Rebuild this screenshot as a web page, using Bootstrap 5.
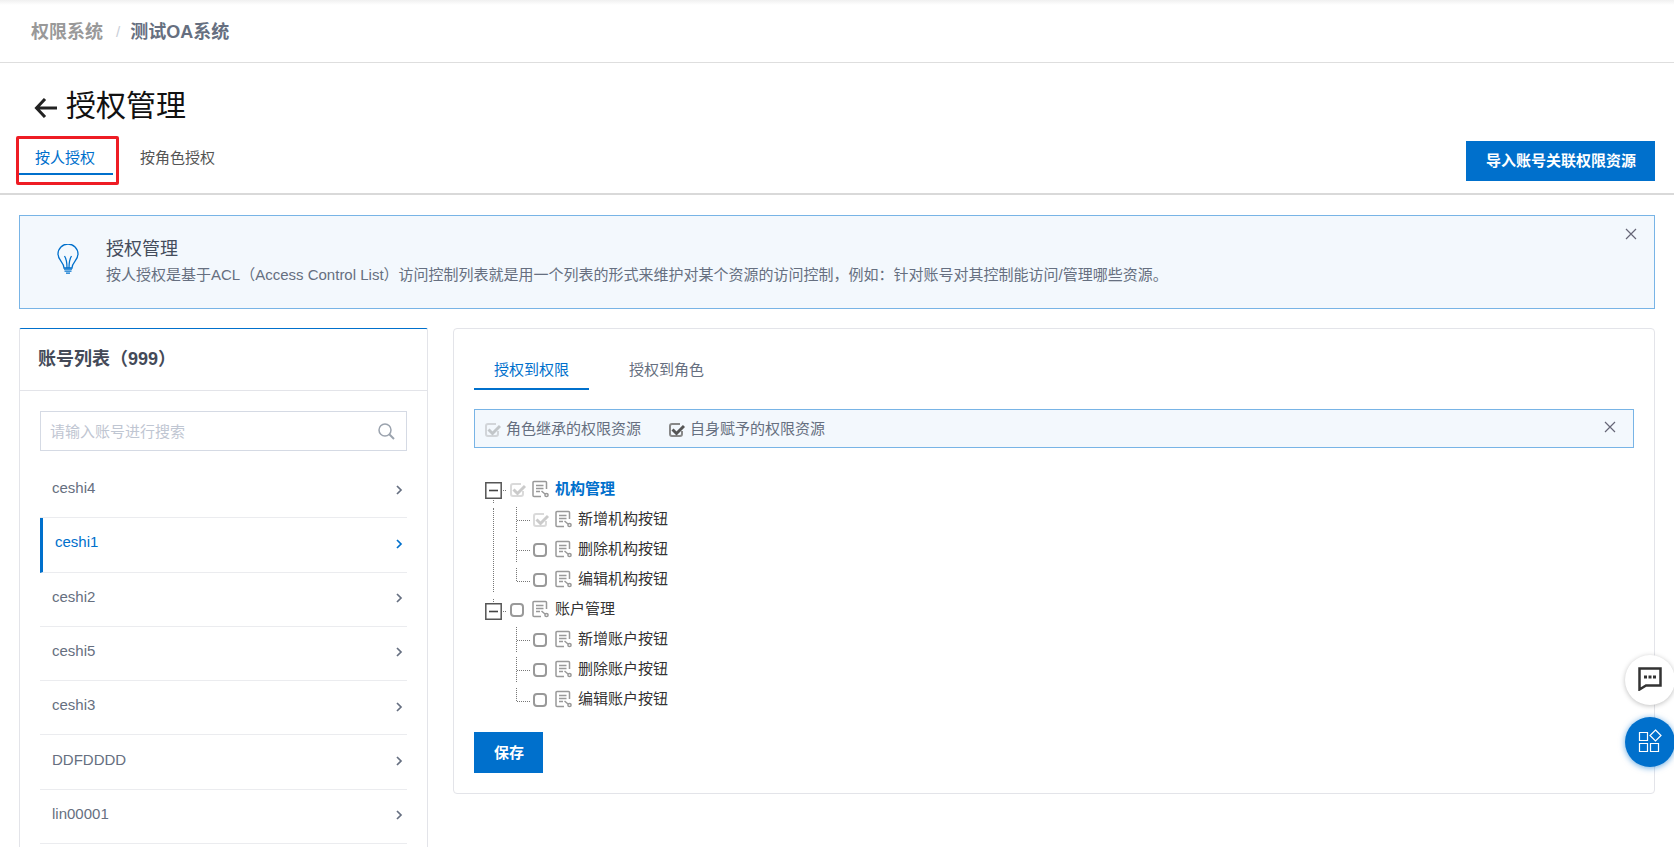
<!DOCTYPE html>
<html lang="zh-CN">
<head>
<meta charset="utf-8">
<meta name="viewport" content="width=device-width, initial-scale=1">
<title>授权管理</title>
<link href="https://cdn.jsdelivr.net/npm/bootstrap@5.3.0/dist/css/bootstrap.min.css" rel="stylesheet">
<style>
  :root { --brand: #0070cc; --line: #e3e4e9; --ink: #666f80; }
  body {
    font-family: "Liberation Sans", "Noto Sans CJK SC", sans-serif;
    font-size: 15px; line-height: 20px; color: var(--ink); background: #fff;
    height: 100vh; overflow: hidden;
  }
  svg { display: block; flex: none; }
  a { text-decoration: none; }
  .topbar { height: 63px; padding: 1px 31px 0; border-bottom: 1px solid #dedede; background: linear-gradient(#f0f0f0, #fff 5px); }
  .topbar .breadcrumb { font-size: 18px; font-weight: 700; }
  .topbar .breadcrumb a { color: #999; }
  .topbar .breadcrumb-item + .breadcrumb-item { padding-left: 13px; color: var(--ink); }
  .topbar .breadcrumb-item + .breadcrumb-item::before { padding-right: 10px; color: #c9ced8; font-weight: 400; font-size: 15px; }

  .page-head { padding: 20px 19px 12px 17px; border-bottom: 2px solid #d9d9d9; }
  .page-head h1 { font-size: 30px; line-height: 46px; font-weight: 400; color: #111; margin: 0; }
  .page-title { padding-left: 17px; gap: 8px; margin-bottom: 12px; }
  .tab-link { display: block; border: 0; border-bottom: 2px solid transparent; background: none; color: #555; }
  .tab-link.active { color: var(--brand); border-color: var(--brand); }
  .head-tabs { gap: 9px; }
  .head-tabs .tab-link { padding: 2px 18px 0; line-height: 30px; }
  .marked { position: relative; }
  .marked::after { content: ""; position: absolute; inset: -5px -6px -10px -1px; border: 3px solid #ee1c24; border-radius: 2px; pointer-events: none; }
  .btn-brand { background: var(--brand); color: #fff; border: 0; border-radius: 0; font-size: 15px; font-weight: 700; line-height: 20px; padding: 10px 19px 10px 20px; }
  .btn-brand:hover { background: #005fad; color: #fff; }

  .page-body { padding: 20px 19px 0; }
  .notice { background: #f3f8fd; border: 1px solid #78b4e6; }
  .page-notice { padding: 20px 17px 19px 37px; min-height: 94px; margin-bottom: 19px; gap: 27px; }
  .page-notice h2 { font-size: 18px; line-height: 24px; font-weight: 400; color: #444c5c; margin: 1px 0 4px; }
  .x-btn { border: 0; background: none; padding: 0; color: #667; }
  .page-notice .x-btn { margin-top: -8px; }

  .columns { gap: 25px; }
  .account-panel { flex: 0 0 25%; border: 1px solid var(--line); border-top-color: var(--brand); border-bottom: 0; border-radius: 2px 2px 0 0; }
  .account-panel h2 { font-size: 18px; line-height: 61px; font-weight: 700; color: #444a58; margin: 0; padding: 0 18px; border-bottom: 1px solid var(--line); }
  .account-body { padding: 20px; }
  .search-box { border: 1px solid #d5dae4; height: 40px; padding-right: 11px; color: #9ba3ae; }
  .search-box input { border: 0; font-size: 15px; padding: 0 9px; box-shadow: none !important; }
  .search-box input::placeholder { color: #bfc6d2; }
  .accounts { display: grid; grid-auto-rows: 1fr; height: 380px; margin: 13px 0 0; }
  .accounts a { height: 100%; color: var(--ink); padding: 0 3px 5px 12px; border-bottom: 1px solid #ebecef; }
  .accounts a svg { margin-top: 3px; }
  .accounts a.active { color: var(--brand); box-shadow: none; border-left: 3px solid var(--brand); }

  .grant-panel { border: 1px solid var(--line); border-radius: 4px; padding: 20px; min-width: 0; }
  .grant-tabs { gap: 20px; margin: 0 0 19px; }
  .grant-tabs .tab-link { padding: 3px 20px 0; line-height: 36px; color: var(--ink); }
  .grant-tabs .tab-link.active { color: var(--brand); }
  .legend-bar { height: 39px; padding: 1px 17px 0 9px; margin-bottom: 26px; }
  .legend-bar label { gap: 5px; margin-right: 27px; }
  .legend-bar .x-btn { margin-top: -4px; }

  .tick { appearance: none; flex: none; width: 17px; height: 17px; margin: 3px 0 0; background: center / 17px 17px no-repeat url("data:image/svg+xml,%3Csvg xmlns='http://www.w3.org/2000/svg' viewBox='0 0 17 17'%3E%3Crect x='2' y='2' width='12' height='12' rx='3' fill='%23fff' stroke='%23999' stroke-width='2'/%3E%3C/svg%3E"); }
  .tick:checked { background-image: url("data:image/svg+xml,%3Csvg xmlns='http://www.w3.org/2000/svg' viewBox='0 0 17 17' fill='none'%3E%3Cpath d='M14 9v3a2 2 0 0 1-2 2H4a2 2 0 0 1-2-2V4a2 2 0 0 1 2-2h8' stroke='%23888' stroke-width='2'/%3E%3Cpath d='M4.500 7.500l4 4L16 4' stroke='%23555' stroke-width='3'/%3E%3C/svg%3E"); }
  .tick:disabled { opacity: .3; }

  .tree, .tree ul { list-style: none; margin: 0; padding: 0; }
  .tree { padding-left: 11px; color: #333; }
  .tree ul { position: relative; padding-left: 31px; }
  .tree li:not(:last-child) > ul::before { content: ""; position: absolute; left: 8px; top: 4px; bottom: 2px; border-left: 1px dotted #777; }
  .node { height: 30px; }
  .node label { display: flex; align-items: center; gap: 6px; }
  .node label svg { color: #999; }
  .node .fold { border: 0; background: none; padding: 0; width: 24px; }
  .node .chosen { color: var(--brand); font-weight: 700; }
  .save-row { margin-top: 18px; }
  .save-row .btn-brand { padding-top: 11px; }

  .floaters { position: fixed; right: -1px; bottom: 80px; gap: 12px; }
  .floaters button { width: 50px; height: 50px; border: 0; border-radius: 50%; background: #fff; color: #333; box-shadow: 0 1px 5px rgba(0,0,0,.25); padding: 0 0 3px; }
  .floaters button.apps { background: var(--brand); color: #fff; box-shadow: 0 1px 6px rgba(0,112,204,.6); }
</style>
</head>
<body class="d-flex flex-column">

<svg width="0" height="0" class="position-absolute" aria-hidden="true">
  <symbol id="chevron" viewBox="0 0 9 10"><path d="M2 1l4 4-4 4" fill="none" stroke="currentColor" stroke-width="1.700"/></symbol>
  <symbol id="cross" viewBox="0 0 12 12"><path d="M1 1l10 10M11 1L1 11" fill="none" stroke="currentColor" stroke-width="1.200"/></symbol>
  <symbol id="res" viewBox="0 0 17 18"><g fill="none" stroke="currentColor" stroke-width="1.500"><path d="M14.500 9V2.500a1 1 0 0 0-1-1H2a1 1 0 0 0-1 1v13a1 1 0 0 0 1 1h7M4 5.500h7.500M4 8.500h7.500M4 11.500h4"/><path d="M9.500 11l3.500 3"/><circle cx="14.500" cy="15" r="1.600"/></g></symbol>
  <symbol id="minus" viewBox="0 0 24 30"><path d="M.8 8.800h15.400v15.400H.8z" fill="none" stroke="#555" stroke-width="1.500"/><path d="M4 16.500h9" stroke="#444" stroke-width="1.600"/><path d="M18 16.500h4M8.500 26v4" stroke="#777" stroke-dasharray="1 1"/></symbol>
  <symbol id="minus-end" viewBox="0 0 24 30"><path d="M.8 9.800h15.400v15.400H.8z" fill="none" stroke="#555" stroke-width="1.500"/><path d="M4 17.500h9" stroke="#444" stroke-width="1.600"/><path d="M18 17.500h4M8.500 5v4" stroke="#777" stroke-dasharray="1 1"/></symbol>
  <symbol id="join-mid" viewBox="0 0 16 30"><path d="M.5 3v26M1 16.500h13" fill="none" stroke="#777" stroke-dasharray="1 1"/></symbol>
  <symbol id="join-end" viewBox="0 0 16 30"><path d="M.5 4v14M1 17.500h13" fill="none" stroke="#777" stroke-dasharray="1 1"/></symbol>
</svg>

<header class="topbar d-flex align-items-center flex-shrink-0">
  <nav aria-label="breadcrumb">
    <ol class="breadcrumb mb-0">
      <li class="breadcrumb-item"><a href="#">权限系统</a></li>
      <li class="breadcrumb-item" aria-current="page">测试OA系统</li>
    </ol>
  </nav>
</header>

<div class="page-head flex-shrink-0">
  <div class="page-title d-flex align-items-center">
    <a href="#" aria-label="返回" class="pt-1"><svg width="24" height="20" viewBox="0 0 24 20" fill="none" stroke="#222" stroke-width="3"><path d="M23 10H3M11 1L2.500 10l8.500 9"/></svg></a>
    <h1>授权管理</h1>
  </div>
  <div class="d-flex justify-content-between align-items-start">
    <nav class="head-tabs d-flex">
      <div class="marked"><a class="tab-link active" href="#">按人授权</a></div>
      <a class="tab-link" href="#">按角色授权</a>
    </nav>
    <button type="button" class="btn btn-brand">导入账号关联权限资源</button>
  </div>
</div>

<main class="page-body d-flex flex-column flex-grow-1">
  <section class="notice page-notice d-flex align-items-start">
    <svg class="mt-2" width="22" height="30" viewBox="0 0 22 30" fill="none" stroke="#0070cc" stroke-width="1.300"><path d="M7 24c0-6-6-7.500-6-14a10 10 0 0 1 20 0c0 6.500-6 8-6 14zM7.500 12c2 3 2.500 6 2.500 12M14.500 12c-2 3-2.500 6-2.500 12"/><path d="M7 25.200h8M7.500 27.200h7M9 29.200h4"/></svg>
    <div class="flex-grow-1">
      <h2>授权管理</h2>
      <p class="mb-0">按人授权是基于ACL（Access Control List）访问控制列表就是用一个列表的形式来维护对某个资源的访问控制，例如：针对账号对其控制能访问/管理哪些资源。</p>
    </div>
    <button type="button" class="x-btn" aria-label="关闭"><svg width="12" height="12"><use href="#cross"/></svg></button>
  </section>

  <div class="columns d-flex flex-grow-1 align-items-start">
    <aside class="account-panel align-self-stretch">
      <h2>账号列表（999）</h2>
      <div class="account-body">
        <div class="search-box d-flex align-items-center">
          <input type="search" class="form-control h-100" placeholder="请输入账号进行搜索" aria-label="搜索账号">
          <svg width="17" height="17" viewBox="0 0 17 17" fill="none" stroke="currentColor"><circle cx="7" cy="7" r="6" stroke-width="1.500"/><path d="M11 11l5 5" stroke-width="2"/></svg>
        </div>
        <ul class="accounts list-unstyled">
          <li><a href="#" class="d-flex align-items-center justify-content-between">ceshi4<svg width="9" height="10"><use href="#chevron"/></svg></a></li>
          <li><a href="#" class="active d-flex align-items-center justify-content-between">ceshi1<svg width="9" height="10"><use href="#chevron"/></svg></a></li>
          <li><a href="#" class="d-flex align-items-center justify-content-between">ceshi2<svg width="9" height="10"><use href="#chevron"/></svg></a></li>
          <li><a href="#" class="d-flex align-items-center justify-content-between">ceshi5<svg width="9" height="10"><use href="#chevron"/></svg></a></li>
          <li><a href="#" class="d-flex align-items-center justify-content-between">ceshi3<svg width="9" height="10"><use href="#chevron"/></svg></a></li>
          <li><a href="#" class="d-flex align-items-center justify-content-between">DDFDDDD<svg width="9" height="10"><use href="#chevron"/></svg></a></li>
          <li><a href="#" class="d-flex align-items-center justify-content-between">lin00001<svg width="9" height="10"><use href="#chevron"/></svg></a></li>
        </ul>
      </div>
    </aside>

    <section class="grant-panel flex-grow-1">
      <nav class="grant-tabs d-flex">
        <a class="tab-link active" href="#">授权到权限</a>
        <a class="tab-link" href="#">授权到角色</a>
      </nav>
      <div class="notice legend-bar d-flex align-items-center">
        <label class="d-flex align-items-center"><input type="checkbox" class="tick" checked disabled>角色继承的权限资源</label>
        <label class="d-flex align-items-center"><input type="checkbox" class="tick" checked>自身赋予的权限资源</label>
        <button type="button" class="x-btn ms-auto" aria-label="关闭"><svg width="12" height="12"><use href="#cross"/></svg></button>
      </div>

      <ul class="tree">
        <li>
          <div class="node d-flex align-items-center">
            <button type="button" class="fold" aria-label="折叠"><svg width="24" height="30"><use href="#minus"/></svg></button>
            <label><input type="checkbox" class="tick" checked disabled><svg width="17" height="18"><use href="#res"/></svg><span class="chosen">机构管理</span></label>
          </div>
          <ul>
            <li class="node d-flex align-items-center"><svg width="16" height="30"><use href="#join-mid"/></svg><label><input type="checkbox" class="tick" checked disabled><svg width="17" height="18"><use href="#res"/></svg>新增机构按钮</label></li>
            <li class="node d-flex align-items-center"><svg width="16" height="30"><use href="#join-mid"/></svg><label><input type="checkbox" class="tick"><svg width="17" height="18"><use href="#res"/></svg>删除机构按钮</label></li>
            <li class="node d-flex align-items-center"><svg width="16" height="30"><use href="#join-end"/></svg><label><input type="checkbox" class="tick"><svg width="17" height="18"><use href="#res"/></svg>编辑机构按钮</label></li>
          </ul>
        </li>
        <li>
          <div class="node d-flex align-items-center">
            <button type="button" class="fold" aria-label="折叠"><svg width="24" height="30"><use href="#minus-end"/></svg></button>
            <label><input type="checkbox" class="tick"><svg width="17" height="18"><use href="#res"/></svg>账户管理</label>
          </div>
          <ul>
            <li class="node d-flex align-items-center"><svg width="16" height="30"><use href="#join-mid"/></svg><label><input type="checkbox" class="tick"><svg width="17" height="18"><use href="#res"/></svg>新增账户按钮</label></li>
            <li class="node d-flex align-items-center"><svg width="16" height="30"><use href="#join-mid"/></svg><label><input type="checkbox" class="tick"><svg width="17" height="18"><use href="#res"/></svg>删除账户按钮</label></li>
            <li class="node d-flex align-items-center"><svg width="16" height="30"><use href="#join-end"/></svg><label><input type="checkbox" class="tick"><svg width="17" height="18"><use href="#res"/></svg>编辑账户按钮</label></li>
          </ul>
        </li>
      </ul>
      <div class="save-row"><button type="button" class="btn btn-brand">保存</button></div>
    </section>
  </div>
</main>

<div class="floaters d-flex flex-column">
  <button type="button" class="d-flex align-items-center justify-content-center" aria-label="消息"><svg width="24" height="24" viewBox="0 0 24 24" fill="none" stroke="currentColor" stroke-width="2.500"><path d="M1.500 1.500h21v17H8l-6.500 4z"/><path d="M6 10h3M10.500 10h3M15 10h3" stroke-width="3"/></svg></button>
  <button type="button" class="apps d-flex align-items-center justify-content-center" aria-label="应用"><svg width="24" height="24" viewBox="0 0 24 24" fill="none" stroke="currentColor" stroke-width="1.200"><path d="M1.500 3.500h8v8h-8zM1.500 14.500h8v8h-8zM12.500 14.500h8v8h-8zM17.500 1l5.500 5.500-5.500 5.500L12 6.500z"/></svg></button>
</div>

<script src="https://cdn.jsdelivr.net/npm/bootstrap@5.3.0/dist/js/bootstrap.bundle.min.js"></script>
</body>
</html>
